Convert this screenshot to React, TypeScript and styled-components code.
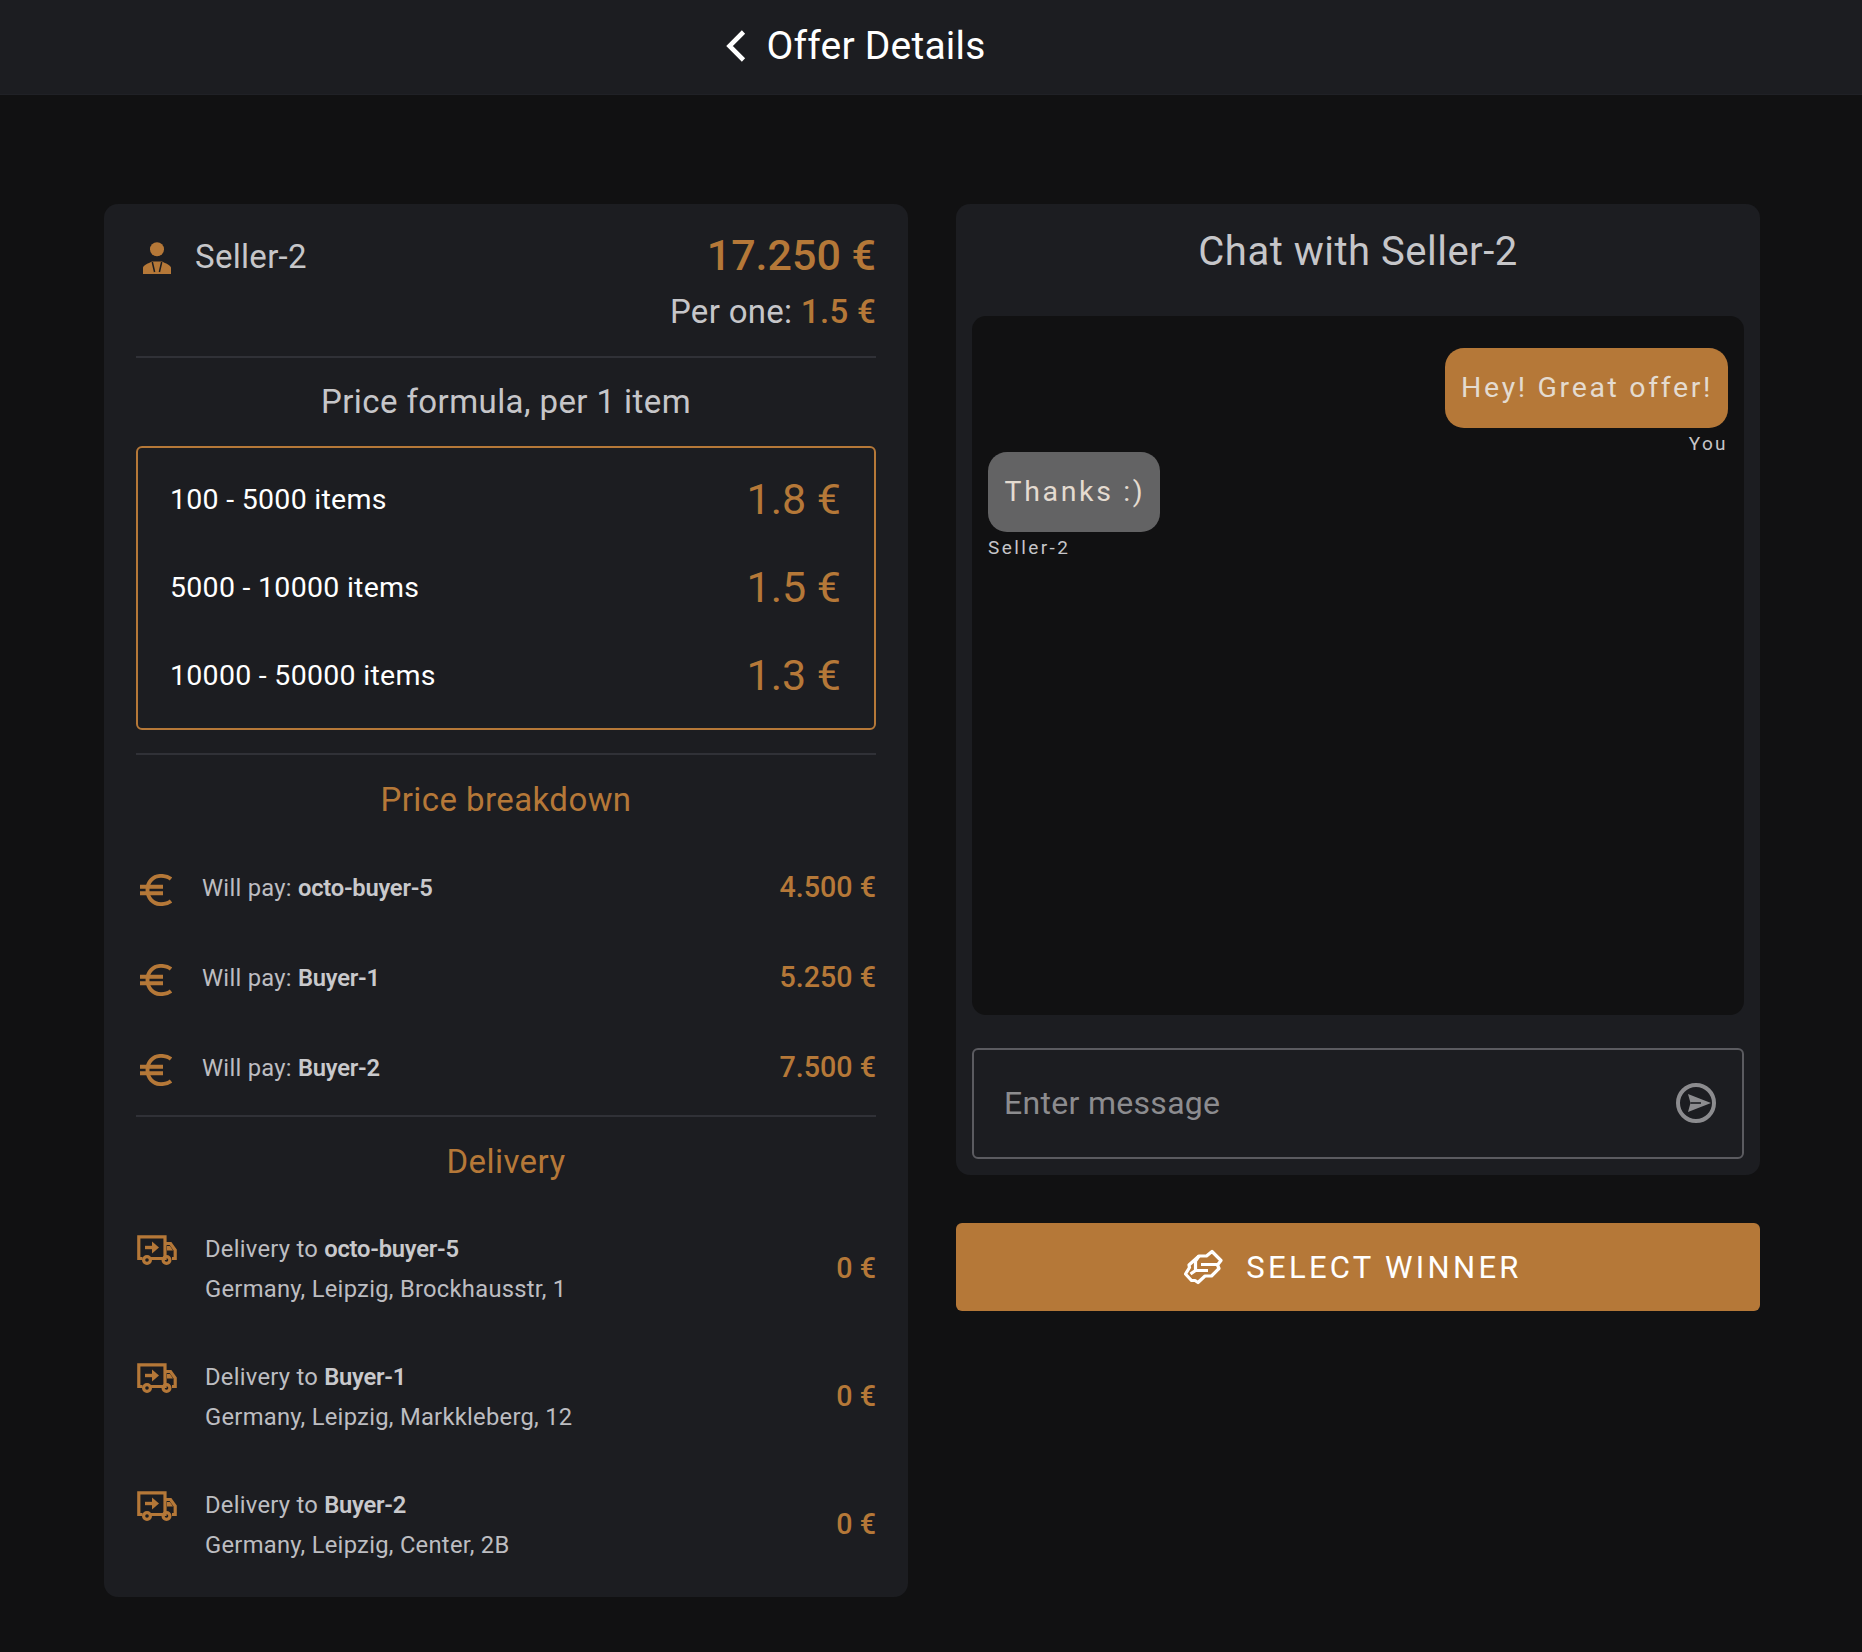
import React from "react";
import styled, { createGlobalStyle } from "styled-components";

const accent = "#b57838";
const textSoft = "#c6c6c9";
const panel = "#1c1d21";

const Global = createGlobalStyle`
  html, body { margin: 0; padding: 0; background: #111112; }
  body { font-family: Roboto, "Liberation Sans", sans-serif; color: ${textSoft}; }
  * { box-sizing: border-box; }
`;

const Page = styled.div`
  width: 1862px;
  height: 1652px;
  background: #111112;
  overflow: hidden;
`;

const Header = styled.header`
  height: 94px;
  background: ${panel};
  display: flex;
  align-items: center;
  justify-content: center;
  gap: 20px;
  padding: 0 150px 2px 0;
  box-shadow: 0 1px 0 #202126;
`;

const HeaderTitle = styled.h1`
  margin: 0;
  font-size: 39px;
  font-weight: 400;
  color: #fff;
  line-height: 90px;
  letter-spacing: 0.2px;
`;

const Columns = styled.main`
  display: grid;
  grid-template-columns: 804px 804px;
  gap: 48px;
  padding: 110px 0 0 104px;
  align-items: start;
`;

const Card = styled.section`
  background: ${panel};
  border-radius: 14px;
  padding: 0 32px;
`;

const SummaryRow = styled.div`
  display: flex;
  justify-content: space-between;
  align-items: center;
  height: 52px;
  margin-top: 26px;
`;

const Seller = styled.div`
  display: flex;
  align-items: center;
  gap: 24px;
  padding-left: 7px;
  font-size: 33px;
  letter-spacing: 0.3px;
`;

const PersonSlot = styled.div`
  line-height: 0;
  padding-top: 3px;
`;

const Total = styled.div`
  font-size: 43px;
  font-weight: 500;
  padding-bottom: 2px;
  color: ${accent};
`;

const PerOne = styled.div`
  text-align: right;
  font-size: 33px;
  line-height: 40px;
  margin: 10px 0 24px;
  letter-spacing: 0.3px;
  span { color: ${accent}; font-weight: 500; }
`;

const Divider = styled.hr`
  border: 0;
  height: 2px;
  margin: 0;
  background: #303137;
`;

const SectionTitle = styled.h2<{ $accent?: boolean }>`
  margin: 0;
  height: 88px;
  padding-bottom: ${(p) => (p.$accent ? 0 : 2)}px;
  display: flex;
  align-items: center;
  justify-content: center;
  font-size: 33px;
  font-weight: 400;
  letter-spacing: 0.42px;
  color: ${(p) => (p.$accent ? accent : textSoft)};
`;

const FormulaBox = styled.div`
  border: 2px solid ${accent};
  border-radius: 6px;
  padding: 8px 33px 8px 32px;
  margin-bottom: 23px;
`;

const FormulaRow = styled.div`
  height: 88px;
  padding-bottom: 2px;
  display: flex;
  justify-content: space-between;
  align-items: center;
  color: #fff;
  font-size: 28.5px;
  letter-spacing: 0.28px;
`;

const FormulaPrice = styled.span`
  color: ${accent};
  font-size: 43px;
  letter-spacing: 0;
`;

const PayRow = styled.div`
  height: 90px;
  display: flex;
  align-items: center;
  gap: 30px;
  padding-left: 3px;
`;

const EuroSlot = styled.div`
  line-height: 0;
  padding-top: 4px;
`;

const RowText = styled.div`
  flex: 1;
  font-size: 23.75px;
  letter-spacing: 0.27px;
  line-height: 40px;
  color: #bdbdc1;
  b { font-weight: 600; color: #c9c9cc; letter-spacing: -0.25px; }
`;

const Amount = styled.div`
  font-size: 28.7px;
  font-weight: 500;
  padding-bottom: 2px;
  color: ${accent};
`;

const BreakdownList = styled.div`
  padding-bottom: 2px;
`;

const DeliveryList = styled.div`
  padding-bottom: 8px;
`;

const DeliveryRow = styled.div`
  height: 128px;
  display: flex;
  align-items: center;
  gap: 28px;
  padding-left: 1px;
`;

const TruckSlot = styled.div`
  align-self: flex-start;
  padding-top: 30px;
  line-height: 0;
`;

const RightColumn = styled.div`
  display: flex;
  flex-direction: column;
  gap: 48px;
`;

const ChatCard = styled(Card)`
  padding: 0 16px 16px;
`;

const ChatTitle = styled.h2`
  margin: 0;
  height: 112px;
  padding-bottom: 18px;
  display: flex;
  align-items: center;
  justify-content: center;
  font-size: 40px;
  font-weight: 400;
  letter-spacing: 0.5px;
  color: ${textSoft};
`;

const ChatArea = styled.div`
  height: 699px;
  background: #111112;
  border-radius: 14px;
  padding: 32px 16px;
  display: flex;
  flex-direction: column;
`;

const Message = styled.div<{ $mine?: boolean }>`
  display: flex;
  flex-direction: column;
  align-items: ${(p) => (p.$mine ? "flex-end" : "flex-start")};
`;

const Bubble = styled.div<{ $mine?: boolean }>`
  height: 80px;
  padding: 0 15px 2px 16.5px;
  display: flex;
  align-items: center;
  border-radius: 19px;
  font-size: 28.5px;
  letter-spacing: 2.65px;
  background: ${(p) => (p.$mine ? accent : "#636364")};
  color: #e4dbd0;
`;

const Author = styled.div`
  height: 24px;
  padding-top: 7px;
  display: flex;
  align-items: center;
  font-size: 19px;
  letter-spacing: 2.4px;
  color: ${textSoft};
`;

const InputBox = styled.div`
  margin-top: 33px;
  height: 111px;
  border: 2px solid #5b5b60;
  border-radius: 6px;
  display: flex;
  align-items: center;
  justify-content: space-between;
  padding: 0 26px 2px 30px;
  font-size: 32px;
  letter-spacing: 0.3px;
  color: #8c8c8f;
`;

const WinnerButton = styled.button`
  height: 88px;
  border: 0;
  border-radius: 6px;
  padding: 0 10px 0 0;
  background: ${accent};
  color: #fff;
  font-family: inherit;
  font-size: 31px;
  letter-spacing: 3.3px;
  display: flex;
  align-items: center;
  justify-content: center;
  gap: 23px;
`;

const Person = () => (
  <svg width="28" height="32" viewBox="0 0 28 32" fill={accent}>
    <circle cx="14" cy="7.2" r="7" />
    <path d="M0 32V25.5C1 23 5 21.5 9 19.5H19C23 21.5 27 23 28 25.5V32Z" />
    <path d="M9.3 20L11.6 30M18.7 20L16.4 30" stroke={panel} strokeWidth="1.5" fill="none" />
  </svg>
);

const Euro = () => (
  <svg width="33" height="32" viewBox="0 0 33 32" fill="none" stroke={accent} strokeWidth="3.9">
    <path d="M32 5C29 2.5 26 1.9 22 1.9 14 1.9 8.5 8 8.5 16 8.5 24 14 30.1 22 30.1 26 30.1 29 29.5 32 27" />
    <path d="M1 12.7H24M1 19.3H24" />
  </svg>
);

const Truck = () => (
  <svg width="40" height="30" viewBox="0 0 40 30" fill="none" stroke={accent} strokeWidth="3.2">
    <path d="M5.5 23.5H1.8V1.8H28V23.5H14" />
    <path d="M28 8.5H33.5L38.2 15V23.5H35M28 23.5H24" />
    <circle cx="10" cy="25" r="3.4" />
    <circle cx="29.5" cy="25" r="3.4" />
    <path d="M30 11H33L36 15.5H30Z" fill={accent} stroke="none" />
    <path d="M8 12.5H18" strokeWidth="3.4" />
    <path d="M15 6.5L22 12.5 15 18.5Z" fill={accent} stroke="none" />
  </svg>
);

const Deal = () => (
  <svg width="39" height="36" viewBox="9 8 39 36" fill="none" stroke="#fff" strokeWidth="3.2" strokeLinejoin="round">
    <path d="M37 10.5L46 19.5 42.5 24 44 27.5 36.5 35H30L23 41.5 20 39.5H16.5L10.5 33 14.5 26.5 14 24 24 15H31.5Z" />
    <path d="M24 15L20.5 20V29M26 23.5H43M15.5 33L20.5 29.5H33" />
  </svg>
);

const Send = () => (
  <svg width="40" height="40" viewBox="0 0 40 40" fill="none" stroke="#8c8c8f" strokeWidth="4">
    <circle cx="20" cy="20" r="18" />
    <path d="M12 11L35 20 12 29 14.5 20Z" fill="#8c8c8f" stroke="none" />
    <path d="M14.5 20H25" stroke={panel} strokeWidth="1.6" />
  </svg>
);

const BackArrow = () => (
  <svg width="20" height="32" viewBox="0 0 20 32" fill="none" stroke="#fff" strokeWidth="4.6">
    <path d="M17.5 2L3.5 16 17.5 30" />
  </svg>
);

const tiers: [string, string][] = [
  ["100 - 5000 items", "1.8 €"],
  ["5000 - 10000 items", "1.5 €"],
  ["10000 - 50000 items", "1.3 €"],
];

const payers: [string, string][] = [
  ["octo-buyer-5", "4.500 €"],
  ["Buyer-1", "5.250 €"],
  ["Buyer-2", "7.500 €"],
];

const deliveries: [string, string][] = [
  ["octo-buyer-5", "Germany, Leipzig, Brockhausstr, 1"],
  ["Buyer-1", "Germany, Leipzig, Markkleberg, 12"],
  ["Buyer-2", "Germany, Leipzig, Center, 2B"],
];

export default function App() {
  return (
    <Page>
      <Global />
      <Header>
        <BackArrow />
        <HeaderTitle>Offer Details</HeaderTitle>
      </Header>
      <Columns>
        <Card>
          <SummaryRow>
            <Seller>
              <PersonSlot>
                <Person />
              </PersonSlot>
              Seller-2
            </Seller>
            <Total>17.250 €</Total>
          </SummaryRow>
          <PerOne>
            Per one: <span>1.5 €</span>
          </PerOne>
          <Divider />
          <SectionTitle>Price formula, per 1 item</SectionTitle>
          <FormulaBox>
            {tiers.map(([range, price]) => (
              <FormulaRow key={range}>
                {range}
                <FormulaPrice>{price}</FormulaPrice>
              </FormulaRow>
            ))}
          </FormulaBox>
          <Divider />
          <SectionTitle $accent>Price breakdown</SectionTitle>
          <BreakdownList>
            {payers.map(([name, amount]) => (
              <PayRow key={name}>
                <EuroSlot>
                  <Euro />
                </EuroSlot>
                <RowText>
                  Will pay: <b>{name}</b>
                </RowText>
                <Amount>{amount}</Amount>
              </PayRow>
            ))}
          </BreakdownList>
          <Divider />
          <SectionTitle $accent>Delivery</SectionTitle>
          <DeliveryList>
            {deliveries.map(([name, address]) => (
              <DeliveryRow key={name}>
                <TruckSlot>
                  <Truck />
                </TruckSlot>
                <RowText>
                  Delivery to <b>{name}</b>
                  <br />
                  {address}
                </RowText>
                <Amount>0 €</Amount>
              </DeliveryRow>
            ))}
          </DeliveryList>
        </Card>
        <RightColumn>
          <ChatCard>
            <ChatTitle>Chat with Seller-2</ChatTitle>
            <ChatArea>
              <Message $mine>
                <Bubble $mine>Hey! Great offer!</Bubble>
                <Author>You</Author>
              </Message>
              <Message>
                <Bubble>Thanks :)</Bubble>
                <Author>Seller-2</Author>
              </Message>
            </ChatArea>
            <InputBox>
              Enter message
              <Send />
            </InputBox>
          </ChatCard>
          <WinnerButton>
            <Deal />
            SELECT WINNER
          </WinnerButton>
        </RightColumn>
      </Columns>
    </Page>
  );
}
